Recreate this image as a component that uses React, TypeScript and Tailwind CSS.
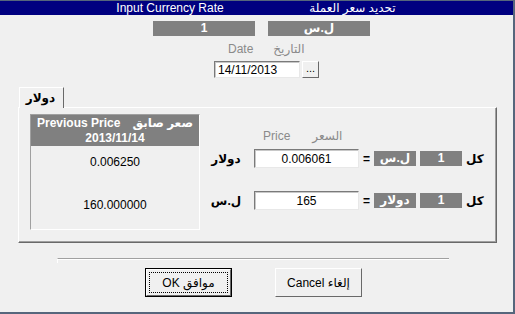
const font = { fontFamily: '"Liberation Sans", "DejaVu Sans", Arial, sans-serif' }

function GreyBox({ text, w }: { text: string; w: string }) {
  return (
    <div className={`${w} h-[15px] bg-[#808080] text-white font-bold text-[12px] leading-[15px] text-center`}>
      {text}
    </div>
  )
}

function Sunken({ value, w, h, align = 'text-center' }: { value: string; w: string; h: string; align?: string }) {
  return (
    <div className={`${w} ${h} bg-white border border-t-[#7a7a7a] border-l-[#7a7a7a] border-b-[#e8e8e8] border-r-[#e8e8e8] shadow-[inset_1px_1px_0_#c8c8c8] flex items-center ${align} text-[12px] text-black px-[3px]`}>
      <span className="w-full">{value}</span>
    </div>
  )
}

function RateRow({ label, value, from }: { label: string; value: string; from: string }) {
  return (
    <div className="flex items-center h-[19px]">
      <div className="w-[40px] text-center text-[12px] font-bold text-black">{label}</div>
      <div className="w-[8px]" />
      <Sunken value={value} w="w-[105px]" h="h-[19px]" />
      <div className="w-[15px] text-center text-[12px] font-bold text-black">=</div>
      <GreyBox text={from} w="w-[42px]" />
      <div className="w-[4px]" />
      <GreyBox text="1" w="w-[42px]" />
      <div className="ml-[4px] text-[12px] font-bold text-black">كل</div>
    </div>
  )
}

function Button({ label, def }: { label: string; def?: boolean }) {
  return (
    <div className={`w-[87px] h-[29px] ${def ? 'border border-black' : 'border border-t-white border-l-white border-b-[#696969] border-r-[#696969]'} bg-[#f0f0f0] flex`}>
      <div className={`flex-1 flex items-center justify-center ${def ? 'border border-t-white border-l-white border-b-[#696969] border-r-[#696969] p-[2px]' : ''}`}>
        <div className={`flex-1 self-stretch flex items-center justify-center text-[12px] text-black ${def ? 'border border-dotted border-black' : ''}`}>
          {label}
        </div>
      </div>
    </div>
  )
}

export default function App() {
  return (
    <div style={font} className="w-[515px] h-[314px] bg-[#f0f0f0] border-t border-r-2 border-b-2 border-[#56667c] flex flex-col overflow-hidden">
      <div className="h-[14px] bg-[#000080] flex items-center text-white text-[12px] leading-[14px]">
        <div className="w-[240px] pl-[100px] text-center">Input Currency Rate</div>
        <div className="w-[105px] ml-[60px] text-center">تحديد سعر العملة</div>
      </div>

      <div className="flex mt-[6px] pl-[153px] gap-[13px]">
        <GreyBox text="1" w="w-[102px]" />
        <GreyBox text="ل.س" w="w-[102px]" />
      </div>

      <div className="flex mt-[6px] pl-[228px] gap-[20px] text-[12px] text-[#8a8a8a] h-[14px] leading-[14px]">
        <span>Date</span>
        <span>التاريخ</span>
      </div>

      <div className="flex mt-[5px] pl-[214px] gap-[2px]">
        <Sunken value="14/11/2013" w="w-[86px]" h="h-[17px]" align="text-left" />
        <div className="w-[17px] h-[17px] bg-[#f0f0f0] border border-t-white border-l-white border-b-[#696969] border-r-[#696969] text-[11px] text-black leading-[12px] text-center">...</div>
      </div>

      <div className="ml-[18px] mt-[9px] w-[479px]">
        <div className="flex h-[20px]">
          <div className="w-[45px] h-[21px] ml-[1px] bg-[#f0f0f0] border-t border-l border-white border-r border-r-[#696969] relative z-10 flex items-center justify-center text-[12px] font-bold text-black pr-[2px]">
            دولار
          </div>
        </div>
        <div className="h-[136px] border border-t-white border-l-white border-b-[#696969] border-r-[#696969] shadow-[inset_-1px_-1px_0_#a0a0a0] flex pl-[11px] pt-[6px]">
          <div className="w-[170px] h-[116px] border border-t-[#a0a0a0] border-l-[#a0a0a0] border-b-white border-r-white flex flex-col">
            <div className="h-[31px] bg-[#808080] text-white font-bold text-[12px] leading-[15px] flex flex-col items-center justify-center">
              <div className="flex gap-[12px]">
                <span>Previous Price</span>
                <span>صعر صابق</span>
              </div>
              <div>2013/11/14</div>
            </div>
            <div className="text-[12px] text-black text-center mt-[9px] h-[15px] leading-[15px]">0.006250</div>
            <div className="text-[12px] text-black text-center mt-[28px] h-[15px] leading-[15px]">160.000000</div>
          </div>

          <div className="ml-[6px] flex flex-col">
            <div className="flex mt-[15px] pl-[57px] gap-[22px] text-[12px] text-[#8a8a8a] h-[14px] leading-[14px]">
              <span>Price</span>
              <span>السعر</span>
            </div>
            <div className="mt-[6px]">
              <RateRow label="دولار" value="0.006061" from="ل.س" />
            </div>
            <div className="mt-[23px]">
              <RateRow label="ل.س" value="165" from="دولار" />
            </div>
          </div>
        </div>
      </div>

      <div className="ml-[57px] mt-[15px] w-[392px] h-[5px] border-t border-t-[#a0a0a0] border-l border-l-white shadow-[inset_0_1px_0_#fff]" />

      <div className="flex mt-[5px] pl-[145px] gap-[43px]">
        <Button label="OK موافق" def />
        <Button label="Cancel إلغاء" />
      </div>
    </div>
  )
}
